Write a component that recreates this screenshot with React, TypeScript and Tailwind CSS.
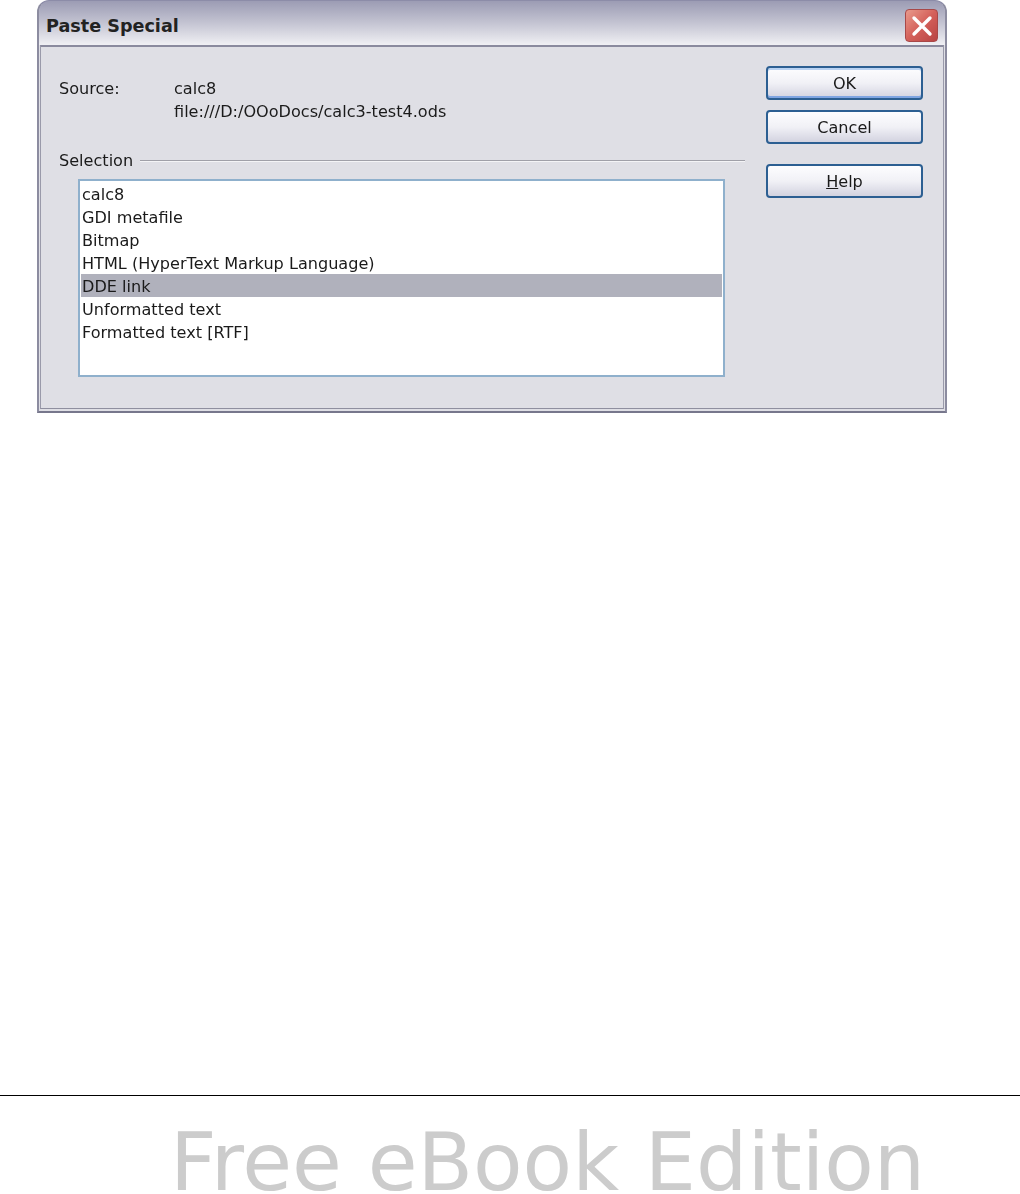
const formats = [
  "calc8",
  "GDI metafile",
  "Bitmap",
  "HTML (HyperText Markup Language)",
  "DDE link",
  "Unformatted text",
  "Formatted text [RTF]",
];

function DialogButton({ children, focused, className }: { children: React.ReactNode; focused?: boolean; className?: string }) {
  return (
    <button
      type="button"
      className={`flex h-[34px] w-[157px] items-center justify-center rounded-[4px] border-2 border-[#2c5f92] bg-gradient-to-b from-[#fdfdff] via-[#f1f1f6] to-[#d3d3e0] pt-px text-[#1a1a1a] ${focused ? "shadow-[inset_0_2px_0_#b9d2f2,inset_0_-2px_0_#7fa5e2]" : ""} ${className ?? ""}`}
    >
      {children}
    </button>
  );
}

export default function App() {
  return (
    <div className="flex h-[1194px] w-[1020px] flex-col overflow-hidden bg-white font-['DejaVu_Sans',sans-serif] text-[16.1px] leading-[23px] text-[#1a1a1a]">
      <div className="ml-[37px] flex h-[413px] w-[910px] shrink-0 flex-col rounded-t-[12px] border-2 border-x-[#8c8ca0] border-b-[#77778c] border-t-[#8c8ca8] bg-[#dfdfe5] blur-[0.4px]">
        {/* 타이틀바 */}
        <div className="-mt-px flex h-[44px] shrink-0 items-start justify-between rounded-t-[10px] bg-gradient-to-b from-[#9c9cb4] via-[#c4c4d2] to-[#f0f0f4] px-[7px]">
          <span className="pt-[14px] text-[17.6px] font-bold text-[#222]">Paste Special</span>
          <div className="mt-[8px] flex size-[33px] items-center justify-center rounded-[4px] border border-[#a84848] bg-gradient-to-br from-[#e89a8c] via-[#d4605a] to-[#b84444]">
            <svg width="24" height="24" viewBox="0 0 24 24" aria-hidden="true">
              <path d="M4 4 L20 20 M20 4 L4 20" stroke="#fff" strokeWidth="3.4" strokeLinecap="round" />
            </svg>
          </div>
        </div>

        <div className="flex min-h-0 flex-1 px-px pb-[2px]">
          <div className="flex flex-1 border-x border-b border-t-2 border-x-[#9a9aaa] border-b-[#8f8f9f] border-t-[#8a8a9e]">
            <div className="ml-[18px] w-[686px] pt-[30px]">
              <div className="flex">
                <span className="w-[115px]">Source:</span>
                <div>
                  <div>calc8</div>
                  <div>file:///D:/OOoDocs/calc3-test4.ods</div>
                </div>
              </div>
              <div className="mt-[26px] flex items-center gap-[7px]">
                <span>Selection</span>
                <div className="h-[2px] flex-1 border-t border-b border-t-[#a0a0a8] border-b-[#f4f4f6]" />
              </div>
              <div className="ml-[19px] mt-[7px] h-[198px] w-[647px] border-2 border-[#8fb0cc] bg-white p-px">
                {formats.map((f) => (
                  <div key={f} className={`h-[23px] pl-[1px] leading-[25px] ${f === "DDE link" ? "bg-[#b0b1bc]" : ""}`}>
                    {f}
                  </div>
                ))}
              </div>
            </div>
            <div className="ml-[21px] flex flex-col pt-[19px]">
              <DialogButton focused>OK</DialogButton>
              <DialogButton className="mt-[10px]">Cancel</DialogButton>
              <DialogButton className="mt-[20px]">
                <span>
                  <span className="underline">H</span>elp
                </span>
              </DialogButton>
            </div>
          </div>
        </div>
      </div>

      <div className="mt-[682px] h-px w-full shrink-0 bg-black" />
      <div className="ml-[170px] mt-[34px] whitespace-nowrap text-[81px] leading-[64px] text-[#cccccc]">
        Free eBook Edition
      </div>
    </div>
  );
}
